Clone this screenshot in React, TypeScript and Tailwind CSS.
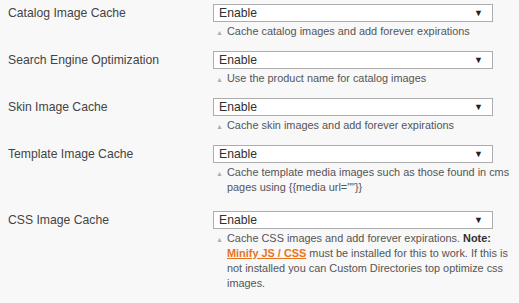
import type { ReactNode } from 'react';

interface CacheRow {
  label: string;
  hint: ReactNode;
  extra?: string;
}

const ROWS: CacheRow[] = [
  { label: 'Catalog Image Cache', hint: 'Cache catalog images and add forever expirations' },
  { label: 'Search Engine Optimization', hint: 'Use the product name for catalog images' },
  { label: 'Skin Image Cache', hint: 'Cache skin images and add forever expirations' },
  {
    label: 'Template Image Cache',
    hint: 'Cache template media images such as those found in cms pages using {{media url=""}}',
    extra: 'mb-[16px]',
  },
  {
    label: 'CSS Image Cache',
    hint: (
      <>
        Cache CSS images and add forever expirations. <b className="text-[#303030]">Note:</b>{' '}
        <a className="font-bold text-[#e8731d] underline">Minify JS / CSS</a> must be installed
        for this to work. If this is not installed you can Custom Directories top optimize css
        images.
      </>
    ),
  },
];

function SelectBox() {
  return (
    <div className="flex h-[18px] w-[280px] items-center justify-between border border-[#adadad] bg-white pl-[5px] pr-[9px] text-[12.2px] leading-none text-[#303030]">
      <span>Enable</span>
      <span className="text-[9px] text-[#222]">▼</span>
    </div>
  );
}

export default function App() {
  return (
    <div
      className="min-h-[303px] w-[519px] bg-[#f8f8f8] pt-[4px] pl-[8px]"
      style={{ fontFamily: '"Liberation Sans", Arial, sans-serif' }}
    >
      {ROWS.map((row) => (
        <div key={row.label} className={`flex ${row.extra ?? 'mb-[12px]'}`}>
          <div className="flex h-[18px] w-[205px] shrink-0 items-center text-[12.2px] text-[#444]">
            {row.label}
          </div>
          <div className="flex flex-col">
            <SelectBox />
            <div className="relative mt-[2px] w-[300px] pl-[14px] text-[10.9px] leading-[15px] text-[#555]">
              <span className="absolute left-[3px] top-[1px] text-[7px] text-[#b0b0b0]">▲</span>
              {row.hint}
            </div>
          </div>
        </div>
      ))}
    </div>
  );
}
